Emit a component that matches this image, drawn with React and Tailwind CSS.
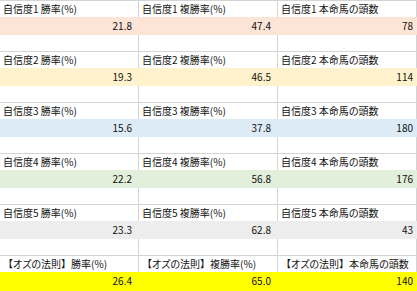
import React from "react";

const odds = (
  <>
    <span className="[font-feature-settings:normal]">【</span>
    オズの法則
    <span className="[font-feature-settings:normal]">】</span>
  </>
);

const blocks = [
  { id: 1, prefix: "自信度1 ", values: ["21.8", "47.4", "78"], fill: "bg-[#fce4d6]" },
  { id: 2, prefix: "自信度2 ", values: ["19.3", "46.5", "114"], fill: "bg-[#fff2cc]" },
  { id: 3, prefix: "自信度3 ", values: ["15.6", "37.8", "180"], fill: "bg-[#ddebf7]" },
  { id: 4, prefix: "自信度4 ", values: ["22.2", "56.8", "176"], fill: "bg-[#e2efda]" },
  { id: 5, prefix: "自信度5 ", values: ["23.3", "62.8", "43"], fill: "bg-[#ededed]" },
  { id: 6, prefix: odds, values: ["26.4", "65.0", "140"], fill: "bg-[#ffff00]", last: true },
];

const labels = ["勝率(%)", "複勝率(%)", "本命馬の頭数"];

function Block({ prefix, values, fill, last }) {
  return (
    <div className="border-t border-[#d4d4d4]">
      {/* label row */}
      <div className="flex h-[16px]">
        {labels.map((l) => (
          <div
            key={l}
            className="w-[139px] shrink-0 border-r border-[#d4d4d4] pl-[3px] leading-[16px] whitespace-nowrap overflow-hidden"
          >
            {prefix}
            {l}
          </div>
        ))}
      </div>

      {/* value row, fill hides the gridlines */}
      <div className={`flex ${last ? "h-[19px]" : "h-[18px]"} ${fill}`}>
        {values.map((v, i) => (
          <div
            key={i}
            className={`w-[139px] shrink-0 text-right leading-[18px] ${i === 2 ? "pr-[4px]" : "pr-[7px]"}`}
          >
            {v}
          </div>
        ))}
      </div>

      {!last && (
        <div className="flex h-[16px]">
          <div className="w-[139px] shrink-0 border-r border-[#d4d4d4]" />
          <div className="w-[139px] shrink-0 border-r border-[#d4d4d4]" />
          <div className="w-[139px] shrink-0 border-r border-[#d4d4d4]" />
        </div>
      )}
    </div>
  );
}

export default function App() {
  return (
    <div className="w-[417px] h-[291px] overflow-hidden bg-white text-[#111] text-[10px] [font-feature-settings:'palt'] font-['Noto_Sans_CJK_JP',sans-serif]">
      {blocks.map((b) => (
        <Block key={b.id} {...b} />
      ))}
    </div>
  );
}
